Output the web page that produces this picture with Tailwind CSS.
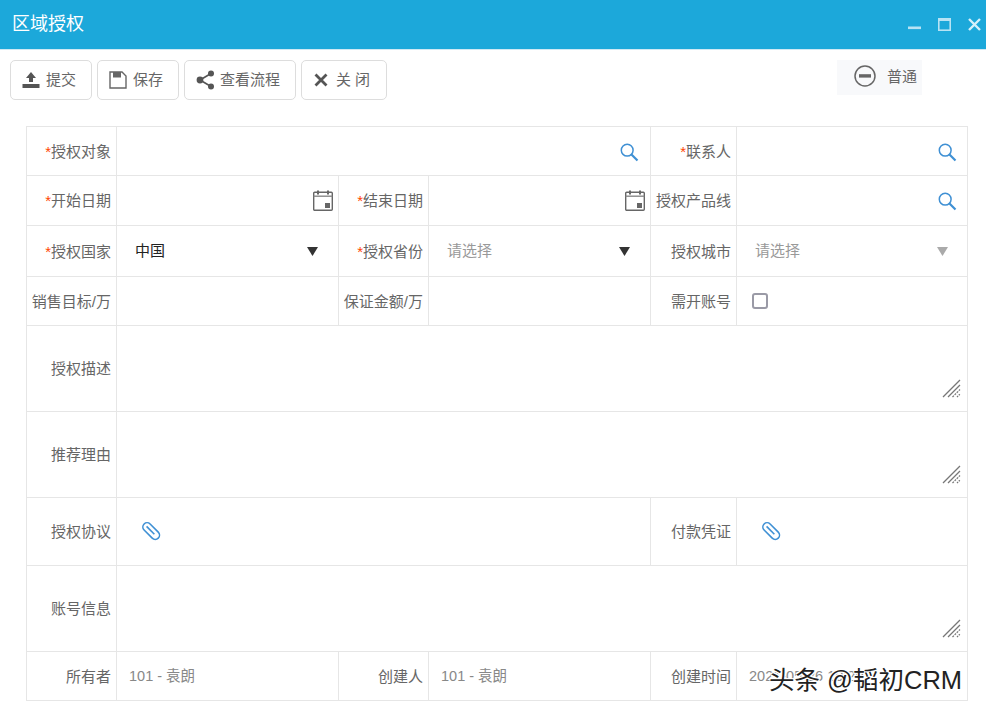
<!DOCTYPE html>
<html lang="zh-CN">
<head>
    <meta charset="UTF-8">
    <title>区域授权</title>
    <script src="https://cdn.jsdelivr.net/npm/@tailwindcss/browser@4"></script>
</head>
<body class="bg-white overflow-hidden font-['Liberation_Sans','Noto_Sans_CJK_SC',sans-serif] text-[15px] text-[#666]">
    <div class="relative w-[986px] h-[713px]">
        <!-- title bar -->
        <div class="h-[49px] bg-[#1ca8da] flex items-center justify-between pl-[12px] pr-[5px]">
            <span class="text-[18px] text-white">区域授权</span>
            <div class="flex items-center gap-[17px]">
                <svg width="13" height="13" viewBox="0 0 13 13"><rect x="0" y="8.5" width="13" height="2.6" fill="#b7e3f4"/></svg>
                <svg width="13" height="13" viewBox="0 0 13 13"><rect x="0.8" y="0.8" width="11.4" height="11.4" fill="none" stroke="#b7e3f4" stroke-width="1.6"/><rect x="0" y="0" width="13" height="3" fill="#b7e3f4"/></svg>
                <svg width="13" height="13" viewBox="0 0 13 13"><path d="M1 1l11 11M12 1L1 12" stroke="#d5f0fa" stroke-width="2.4"/></svg>
            </div>
        </div>
        <div class="h-px bg-[#cfe9f4]"></div>

        <!-- toolbar -->
        <div class="flex justify-between items-start pl-[10px] pr-[64px] pt-[10px] h-[76px]">
            <div class="flex gap-[5px]">
                <button class="h-[40px] w-[82px] border border-[#ddd] rounded-[5px] flex items-center justify-center gap-[6px] pr-[4px]">
                    <svg width="18" height="18" viewBox="0 0 18 18"><path d="M9 1l5 6h-3v4H7V7H4z" fill="#555"/><rect x="0.5" y="13" width="17" height="4" fill="#555"/></svg>
                    <span>提交</span>
                </button>
                <button class="h-[40px] w-[82px] border border-[#ddd] rounded-[5px] flex items-center justify-center gap-[6px] pr-[4px]">
                    <svg width="18" height="18" viewBox="0 0 18 18"><path d="M1 1h12l4 4v12H1z" fill="none" stroke="#666" stroke-width="1.4"/><rect x="4" y="1" width="8" height="5.5" fill="#666"/></svg>
                    <span>保存</span>
                </button>
                <button class="h-[40px] w-[112px] border border-[#ddd] rounded-[5px] flex items-center justify-center gap-[5px] pr-[4px]">
                    <svg width="19" height="20" viewBox="0 0 19 20"><path d="M4 10L15 3.5M4 10l11 6.5" stroke="#555" stroke-width="1.6"/><circle cx="4" cy="10" r="3.4" fill="#555"/><circle cx="15" cy="3.5" r="3" fill="#555"/><circle cx="15" cy="16.5" r="3" fill="#555"/></svg>
                    <span>查看流程</span>
                </button>
                <button class="h-[40px] w-[86px] border border-[#ddd] rounded-[5px] flex items-center justify-center gap-[8px] pr-[4px]">
                    <svg width="14" height="14" viewBox="0 0 14 14"><path d="M1.5 1.5l11 11M12.5 1.5l-11 11" stroke="#555" stroke-width="2.8"/></svg>
                    <span class="tracking-[4px] mr-[-4px]">关闭</span>
                </button>
            </div>
            <div class="w-[85px] h-[35px] bg-[#f8f9fb] flex items-center pl-[17px] gap-[11px]">
                <svg class="-mt-[4px]" width="22" height="22" viewBox="0 0 22 22"><circle cx="11" cy="11" r="10" fill="none" stroke="#666" stroke-width="1.5"/><rect x="5" y="9.2" width="12" height="3.4" fill="#666"/></svg>
                <span>普通</span>
            </div>
        </div>

        <!-- form -->
        <table class="ml-[26px] w-[941px] table-fixed border-collapse [&_td]:border [&_td]:border-[#e6e6e6] [&_td]:p-0 [&_td]:pt-[2px]">
            <colgroup>
                <col class="w-[90px]"><col class="w-[222px]"><col class="w-[90px]"><col class="w-[222px]"><col class="w-[86px]"><col class="w-[231px]">
            </colgroup>
            <tbody>
                <tr class="h-[49px]">
                    <td class="text-right pr-[5px]!"><span class="text-[#f40]">*</span>授权对象</td>
                    <td colspan="3">
                        <div class="flex justify-end pr-[11px]">
                            <svg width="19" height="19" viewBox="0 0 19 19"><circle cx="7.2" cy="7.2" r="5.9" fill="none" stroke="#3f90d4" stroke-width="1.5"/><path d="M11.5 11.5l6 6" stroke="#3f90d4" stroke-width="2.2"/></svg>
                        </div>
                    </td>
                    <td class="text-right pr-[5px]!"><span class="text-[#f40]">*</span>联系人</td>
                    <td>
                        <div class="flex justify-end pr-[10px]">
                            <svg width="19" height="19" viewBox="0 0 19 19"><circle cx="7.2" cy="7.2" r="5.9" fill="none" stroke="#3f90d4" stroke-width="1.5"/><path d="M11.5 11.5l6 6" stroke="#3f90d4" stroke-width="2.2"/></svg>
                        </div>
                    </td>
                </tr>
                <tr class="h-[50px]">
                    <td class="text-right pr-[5px]!"><span class="text-[#f40]">*</span>开始日期</td>
                    <td>
                        <div class="flex justify-end pr-[5px] -mt-[2px]">
                            <svg width="20" height="21" viewBox="0 0 20 21"><rect x="0.7" y="2.2" width="18.6" height="18" rx="1" fill="none" stroke="#666" stroke-width="1.4"/><rect x="0.7" y="5.5" width="18.6" height="1.4" fill="#888"/><rect x="4" y="0.5" width="2" height="4" fill="#666"/><rect x="14" y="0.5" width="2" height="4" fill="#666"/><rect x="12" y="13" width="5" height="5" fill="#666"/></svg>
                        </div>
                    </td>
                    <td class="text-right pr-[5px]!"><span class="text-[#f40]">*</span>结束日期</td>
                    <td>
                        <div class="flex justify-end pr-[5px] -mt-[2px]">
                            <svg width="20" height="21" viewBox="0 0 20 21"><rect x="0.7" y="2.2" width="18.6" height="18" rx="1" fill="none" stroke="#666" stroke-width="1.4"/><rect x="0.7" y="5.5" width="18.6" height="1.4" fill="#888"/><rect x="4" y="0.5" width="2" height="4" fill="#666"/><rect x="14" y="0.5" width="2" height="4" fill="#666"/><rect x="12" y="13" width="5" height="5" fill="#666"/></svg>
                        </div>
                    </td>
                    <td class="text-right pr-[5px]!">授权产品线</td>
                    <td>
                        <div class="flex justify-end pr-[10px]">
                            <svg width="19" height="19" viewBox="0 0 19 19"><circle cx="7.2" cy="7.2" r="5.9" fill="none" stroke="#3f90d4" stroke-width="1.5"/><path d="M11.5 11.5l6 6" stroke="#3f90d4" stroke-width="2.2"/></svg>
                        </div>
                    </td>
                </tr>
                <tr class="h-[51px]">
                    <td class="text-right pr-[5px]!"><span class="text-[#f40]">*</span>授权国家</td>
                    <td>
                        <div class="flex justify-between items-center pl-[18px] pr-[20px] -mt-[2px]">
                            <span class="text-[#222] text-[15px]">中国</span>
                            <svg width="11" height="9" viewBox="0 0 11 9"><path d="M0 0h11L5.5 9z" fill="#333"/></svg>
                        </div>
                    </td>
                    <td class="text-right pr-[5px]!"><span class="text-[#f40]">*</span>授权省份</td>
                    <td>
                        <div class="flex justify-between items-center pl-[18px] pr-[20px] -mt-[2px]">
                            <span class="text-[#999] text-[15px]">请选择</span>
                            <svg width="11" height="9" viewBox="0 0 11 9"><path d="M0 0h11L5.5 9z" fill="#333"/></svg>
                        </div>
                    </td>
                    <td class="text-right pr-[5px]!">授权城市</td>
                    <td>
                        <div class="flex justify-between items-center pl-[18px] pr-[19px] -mt-[2px]">
                            <span class="text-[#999] text-[15px]">请选择</span>
                            <svg width="11" height="9" viewBox="0 0 11 9"><path d="M0 0h11L5.5 9z" fill="#aaa"/></svg>
                        </div>
                    </td>
                </tr>
                <tr class="h-[49px]">
                    <td class="text-right pr-[5px]!">销售目标/万</td>
                    <td></td>
                    <td class="text-right pr-[5px]!">保证金额/万</td>
                    <td></td>
                    <td class="text-right pr-[5px]!">需开账号</td>
                    <td>
                        <div class="ml-[15px] -mt-[2px] w-[16px] h-[16px] border-2 border-[#9a9aa6] rounded-[3px]"></div>
                    </td>
                </tr>
                <tr class="h-[86px]">
                    <td class="text-right pr-[5px]!">授权描述</td>
                    <td colspan="5">
                        <div class="flex justify-end items-end h-[83px] pr-[6px] pb-[13px]">
                            <svg width="19" height="19" viewBox="0 0 19 19"><path d="M1 18L18 1M6 18L18 6" stroke="#777" stroke-width="1.3"/><path d="M10.5 18l7.5-7.5" stroke="#777" stroke-width="1.3" stroke-dasharray="2 1"/><path d="M15 18l3-3" stroke="#777" stroke-width="1.3" stroke-dasharray="1.5 1"/></svg>
                        </div>
                    </td>
                </tr>
                <tr class="h-[86px]">
                    <td class="text-right pr-[5px]!">推荐理由</td>
                    <td colspan="5">
                        <div class="flex justify-end items-end h-[83px] pr-[6px] pb-[13px]">
                            <svg width="19" height="19" viewBox="0 0 19 19"><path d="M1 18L18 1M6 18L18 6" stroke="#777" stroke-width="1.3"/><path d="M10.5 18l7.5-7.5" stroke="#777" stroke-width="1.3" stroke-dasharray="2 1"/><path d="M15 18l3-3" stroke="#777" stroke-width="1.3" stroke-dasharray="1.5 1"/></svg>
                        </div>
                    </td>
                </tr>
                <tr class="h-[68px]">
                    <td class="text-right pr-[5px]!">授权协议</td>
                    <td colspan="3">
                        <div class="pl-[24px] flex -mt-[4px]">
                            <svg width="20" height="21" viewBox="0 0 20 21"><g transform="rotate(-45 10 10.5)" fill="none" stroke="#3f90d4" stroke-width="1.6"><rect x="5.5" y="1" width="8.5" height="20" rx="4.25"/><path d="M9.75 4.500v11"/></g></svg>
                        </div>
                    </td>
                    <td class="text-right pr-[5px]!">付款凭证</td>
                    <td>
                        <div class="pl-[24px] flex -mt-[4px]">
                            <svg width="20" height="21" viewBox="0 0 20 21"><g transform="rotate(-45 10 10.5)" fill="none" stroke="#3f90d4" stroke-width="1.6"><rect x="5.5" y="1" width="8.5" height="20" rx="4.25"/><path d="M9.75 4.500v11"/></g></svg>
                        </div>
                    </td>
                </tr>
                <tr class="h-[86px]">
                    <td class="text-right pr-[5px]!">账号信息</td>
                    <td colspan="5">
                        <div class="flex justify-end items-end h-[83px] pr-[6px] pb-[13px]">
                            <svg width="19" height="19" viewBox="0 0 19 19"><path d="M1 18L18 1M6 18L18 6" stroke="#777" stroke-width="1.3"/><path d="M10.5 18l7.5-7.5" stroke="#777" stroke-width="1.3" stroke-dasharray="2 1"/><path d="M15 18l3-3" stroke="#777" stroke-width="1.3" stroke-dasharray="1.5 1"/></svg>
                        </div>
                    </td>
                </tr>
                <tr class="h-[49px]">
                    <td class="text-right pr-[5px]!">所有者</td>
                    <td class="pl-[12px]! text-[14.5px] text-[#888]">101 - 袁朗</td>
                    <td class="text-right pr-[5px]!">创建人</td>
                    <td class="pl-[12px]! text-[14.5px] text-[#888]">101 - 袁朗</td>
                    <td class="text-right pr-[5px]!">创建时间</td>
                    <td class="pl-[12px]! text-[14.5px] text-[#888]">2021-05-26 10:20</td>
                </tr>
            </tbody>
        </table>

        <!-- watermark over the page -->
        <div class="absolute left-[769px] top-[663px] text-[25.5px] leading-[34px] text-[#222] whitespace-nowrap [text-shadow:-1px_-1px_0_#fff,1px_-1px_0_#fff,-1px_1px_0_#fff,1px_1px_0_#fff]">头条 @韬初CRM</div>
    </div>
</body>
</html>
